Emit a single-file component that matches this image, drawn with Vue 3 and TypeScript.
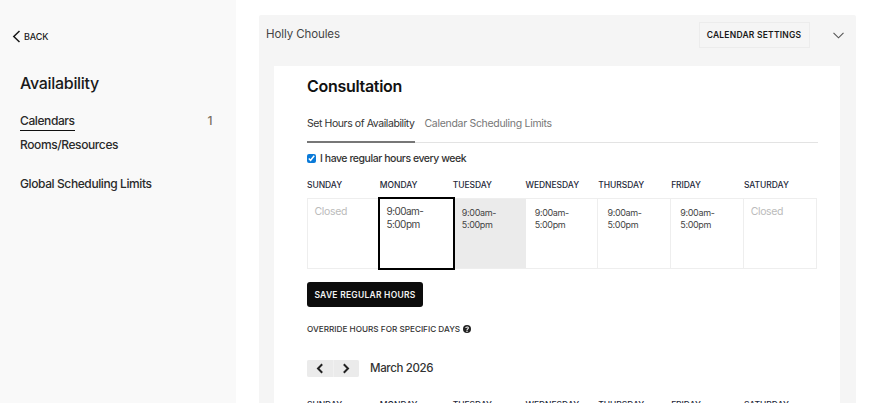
<script setup lang="ts">
interface Day { name: string; hours: string | null; state?: string }
const days: Day[] = [
  { name: 'SUNDAY', hours: null },
  { name: 'MONDAY', hours: '9:00am-\n5:00pm', state: 'selected' },
  { name: 'TUESDAY', hours: '9:00am-\n5:00pm', state: 'hovered' },
  { name: 'WEDNESDAY', hours: '9:00am-\n5:00pm' },
  { name: 'THURSDAY', hours: '9:00am-\n5:00pm' },
  { name: 'FRIDAY', hours: '9:00am-\n5:00pm' },
  { name: 'SATURDAY', hours: null },
]
</script>

<template>
  <div class="page">
    <aside class="sidebar">
      <a class="back">
        <svg width="9" height="13" viewBox="0 0 9 13"><path d="M7.5 1 L1.8 6.5 L7.5 12" fill="none" stroke="#1a1a1a" stroke-width="1.5" /></svg>
        <span>BACK</span>
      </a>
      <h2 class="side-title">Availability</h2>
      <nav class="nav">
        <div class="nav-row">
          <span class="nav-active">Calendars</span>
          <span class="count">1</span>
        </div>
        <div class="nav-item">Rooms/Resources</div>
        <div class="nav-item global">Global Scheduling Limits</div>
      </nav>
    </aside>
    <main class="main">
      <section class="panel">
        <header class="panel-head">
          <span class="owner">Holly Choules</span>
          <button class="settings">CALENDAR SETTINGS</button>
          <svg class="chev" width="11" height="7" viewBox="0 0 11 7"><path d="M0.5 0.8 L5.5 5.8 L10.5 0.8" fill="none" stroke="#555" stroke-width="1.1" /></svg>
        </header>
        <div class="card">
          <h1 class="title">Consultation</h1>
          <div class="tabs">
            <span class="tab active">Set Hours of Availability</span>
            <span class="tab">Calendar Scheduling Limits</span>
          </div>
          <label class="check">
            <input type="checkbox" checked />
            <span>I have regular hours every week</span>
          </label>
          <div class="week-head">
            <span v-for="d in days" :key="d.name">{{ d.name }}</span>
          </div>
          <div class="week">
            <div v-for="d in days" :key="d.name" class="cell" :class="d.state">
              <span v-if="d.hours" class="hours">{{ d.hours }}</span>
              <span v-else class="closed">Closed</span>
            </div>
          </div>
          <button class="save">SAVE REGULAR HOURS</button>
          <div class="override">
            <span>OVERRIDE HOURS FOR SPECIFIC DAYS</span>
            <svg width="8" height="8" viewBox="0 0 10 10"><circle cx="5" cy="5" r="5" fill="#222" /><path d="M3.4 3.9 C3.4 1.9 6.7 1.9 6.7 3.8 C6.7 5 5 5 5 6.2" fill="none" stroke="#fff" stroke-width="1.3" /><rect x="4.2" y="7" width="1.6" height="1.6" fill="#fff" /></svg>
          </div>
          <div class="month-row">
            <div class="pager">
              <button class="pg"><svg width="8" height="11" viewBox="0 0 8 11"><path d="M6.2 1.2 L2 5.5 L6.2 9.8" fill="none" stroke="#222" stroke-width="2" /></svg></button>
              <button class="pg"><svg width="8" height="11" viewBox="0 0 8 11"><path d="M1.8 1.2 L6 5.5 L1.8 9.8" fill="none" stroke="#222" stroke-width="2" /></svg></button>
            </div>
            <span class="month">March 2026</span>
          </div>
          <div class="week-head second">
            <span v-for="d in days" :key="d.name">{{ d.name }}</span>
          </div>
        </div>
      </section>
    </main>
  </div>
</template>

<style>
html, body { margin: 0; background: #fff; }
</style>

<style scoped>
.page {
  display: flex;
  width: 880px;
  height: 403px;
  overflow: hidden;
  font-family: Inter, "Liberation Sans", sans-serif;
  color: #1a1a1a;
}
.sidebar {
  width: 236px;
  flex: none;
  box-sizing: border-box;
  background: #f9f9f9;
  padding: 29px 24px 0 20px;
}
.back {
  display: flex;
  align-items: center;
  gap: 3px;
  margin-left: -8px;
  height: 14px;
  font-size: 9px;
  font-weight: 500;
  letter-spacing: -0.1px;
}
.side-title {
  margin: 30px 0 0;
  font-size: 16px;
  line-height: 20px;
  font-weight: 500;
  letter-spacing: -0.3px;
}
.nav { margin-top: 20px; font-size: 12px; font-weight: 500; color: #2a2a2a; letter-spacing: -0.4px; }
.nav-row { display: flex; justify-content: space-between; align-items: flex-start; height: 24px; }
.nav-active { border-bottom: 1.5px solid #111; line-height: 15px; padding-bottom: 2px; }
.count { color: #7a6f60; line-height: 15px; }
.nav-item { line-height: 15px; }
.nav-item.global { margin-top: 24px; }
.main { flex: 1; padding: 15px 24px 0 23px; min-width: 0; }
.panel {
  background: #f5f5f5;
  border-radius: 2px;
  height: 400px;
  box-sizing: border-box;
  padding: 0 16px 0 15px;
}
.panel-head {
  display: flex;
  align-items: center;
  height: 51px;
  margin-left: -8px;
  padding-bottom: 11px;
  box-sizing: border-box;
}
.owner { font-size: 11.5px; color: #444; flex: 1; margin-bottom: 3px; letter-spacing: -0.1px; }
.settings {
  height: 26px;
  width: 111px;
  padding: 0;
  border: 1px solid #ececec;
  background: #f5f5f5;
  font: 600 8.5px Inter, "Liberation Sans", sans-serif;
  letter-spacing: 0.22px;
  color: #1a1a1a;
}
.chev { margin: 0 -3.5px 0 23px; }
.card {
  background: #fff;
  padding: 0 22px 0 33px;
  height: 340px;
  overflow: hidden;
}
.title {
  margin: 0;
  padding-top: 10px;
  font-size: 16px;
  line-height: 20px;
  font-weight: 600;
  letter-spacing: -0.3px;
  color: #111;
}
.tabs {
  display: flex;
  align-items: flex-start;
  gap: 10px;
  margin-top: 20px;
  height: 26px;
  border-bottom: 1px solid #e3e3e3;
  font-size: 10.5px;
  line-height: 14px;
  letter-spacing: -0.4px;
  color: #777;
}
.tab { height: 27px; padding-top: 1px; box-sizing: border-box; letter-spacing: -0.3px; }
.tab.active { color: #333; border-bottom: 2px solid #777; letter-spacing: -0.42px; }
.check {
  display: flex;
  align-items: center;
  gap: 4px;
  margin-top: 8px;
  height: 14px;
  font-size: 10.5px;
  font-weight: 500;
  letter-spacing: -0.45px;
  color: #333;
}
.check input { margin: 0; width: 9px; height: 9px; accent-color: #0a7ad8; }
.week-head {
  display: grid;
  grid-template-columns: repeat(7, 72.83px);
  margin-top: 14px;
  height: 12px;
  font-size: 8.5px;
  line-height: 12px;
  font-weight: 500;
  letter-spacing: -0.05px;
  color: #1f2a3a;
}
.week {
  display: grid;
  grid-template-columns: 72px repeat(5, 72.83px) 72px;
  width: 510px;
  margin-top: 7px;
  height: 71px;
  border: 1px solid #eee;
  box-sizing: border-box;
}
.cell {
  position: relative;
  box-sizing: border-box;
  border-right: 1px solid #eee;
  padding: 8px 0 0 7px;
  height: 69px;
}
.cell:last-child { border-right: none; }
.hours {
  display: block;
  white-space: pre-line;
  font-size: 9px;
  line-height: 12px;
  letter-spacing: -0.35px;
  color: #444;
  padding-left: 2px;
}
.closed { font-size: 10.5px; line-height: 12px; letter-spacing: -0.35px; color: #bbb; display: block; margin: -1px 0 0 -0.5px; }
.cell.selected {
  z-index: 1;
  margin: -2px -1.7px 0 -2px;
  height: 72.5px;
  border: 2.5px solid #000;
  background: #fff;
  padding: 6px 0 0 6.5px;
}
.cell.selected .hours { font-size: 10px; line-height: 13px; letter-spacing: -0.55px; padding: 0; }
.cell.hovered { background: #ebebeb; border-right-color: #ebebeb; }
.save {
  display: block;
  margin-top: 13px;
  width: 116px;
  height: 25px;
  padding: 0;
  border: none;
  border-radius: 3px;
  background: #0c0c0c;
  color: #f2f2f2;
  font: 600 8.5px Inter, "Liberation Sans", sans-serif;
  letter-spacing: 0.25px;
}
.override {
  display: flex;
  align-items: center;
  gap: 3px;
  margin-top: 16px;
  height: 12px;
  font-size: 8.2px;
  font-weight: 500;
  color: #333;
}
.month-row { display: flex; align-items: center; gap: 11px; margin-top: 25px; }
.pager { display: flex; gap: 1px; background: #f1f1f1; border-radius: 2px; overflow: hidden; }
.pg {
  width: 25.5px;
  height: 17px;
  padding: 0;
  border: none;
  background: #ebebeb;
  display: flex;
  align-items: center;
  justify-content: center;
}
.month { font-size: 11.5px; font-weight: 500; letter-spacing: -0.35px; color: #333; line-height: 17px; }
.week-head.second { margin-top: 22px; }
</style>
